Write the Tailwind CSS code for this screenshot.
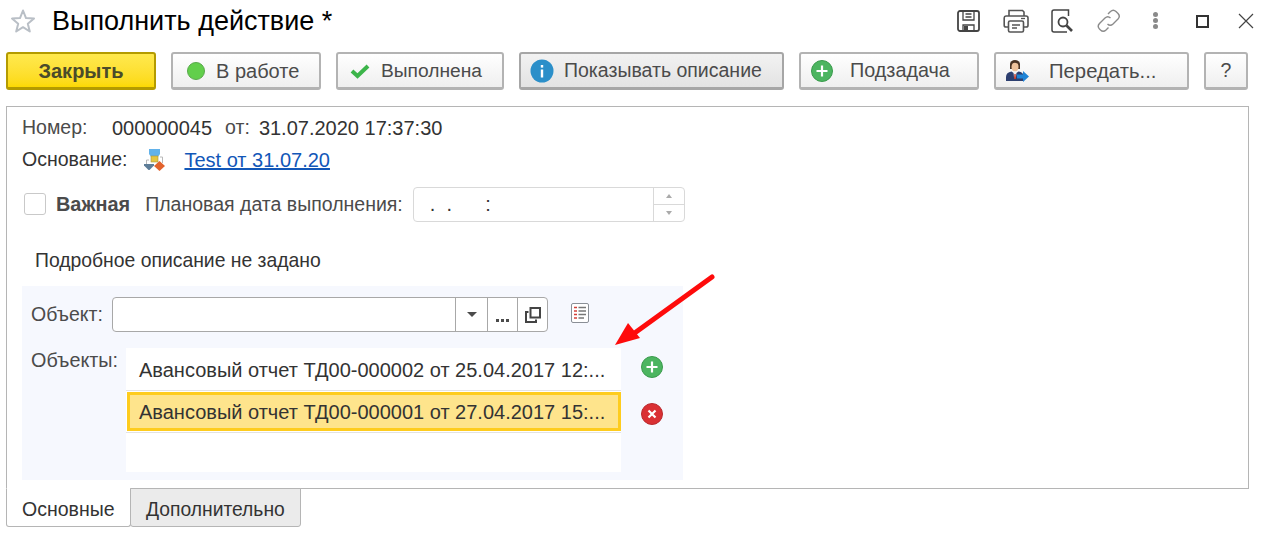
<!DOCTYPE html>
<html lang="ru">
  <head>
    <meta charset="UTF-8" />
    <title>Выполнить действие</title>
    <script src="https://cdn.jsdelivr.net/npm/@tailwindcss/browser@4"></script>
  </head>
  <body class="relative w-[1275px] h-[541px] overflow-hidden bg-white font-['Liberation_Sans',Arial,sans-serif] text-[19.5px] text-[#4b4b4b]">
    <!-- Title row -->
    <header class="flex items-center h-[42px] pl-[10px] pr-[21px]">
      <svg class="w-[26px] h-[26px] mr-[16px]" viewBox="0 0 26 26" fill="none" stroke="#b9bfc6" stroke-width="2">
        <path d="M13 2.500l3 7.600 8 .5-6.200 5.100 2 7.800L13 19.200l-6.800 4.300 2-7.800L2 10.600l8-.5z" stroke-linejoin="round" />
      </svg>
      <h1 class="text-[27px] leading-none text-black whitespace-nowrap">Выполнить действие *</h1>
      <div class="ml-auto flex items-center">
        <!-- save -->
        <svg class="w-[23px] h-[22px] mr-[23px]" viewBox="0 0 23 22" fill="none" stroke="#444" stroke-width="1.800">
          <path d="M3 1h17a2 2 0 0 1 2 2v16a2 2 0 0 1-2 2H3a2 2 0 0 1-2-2V3a2 2 0 0 1 2-2z" />
          <path d="M6 1v9h11V1M8.500 4h6M8.500 7h6" stroke-width="1.300" />
          <path d="M6 21v-6h11v6" stroke-width="1.300" />
          <rect x="7" y="16" width="4" height="5" fill="#444" stroke="none" />
        </svg>
        <!-- print -->
        <svg class="w-[26px] h-[24px] mr-[22px]" viewBox="0 0 26 24" fill="none" stroke="#555" stroke-width="1.600">
          <path d="M6 7V1.500h13.500L21 3v4" />
          <path d="M5 18H3a1.800 1.800 0 0 1-1.800-1.800V9A2 2 0 0 1 3 7h20a2 2 0 0 1 2 2v7.200a1.800 1.800 0 0 1-1.800 1.800H21" />
          <rect x="5.500" y="12" width="15" height="11" rx="1.500" />
          <path d="M9 16h8M9 19h5" stroke-width="1.300" />
          <path d="M18 9.500h4" stroke-width="1.300" />
        </svg>
        <!-- preview -->
        <svg class="w-[23px] h-[24px] mr-[23px]" viewBox="0 0 23 24" fill="none" stroke="#444" stroke-width="1.500">
          <path d="M16 23H3a2 2 0 0 1-2-2V3a2 2 0 0 1 2-2h14.500v6" />
          <circle cx="12" cy="13" r="4.500" stroke-width="1.800" />
          <path d="M15.500 16.500l5.500 5.500" stroke-width="2.600" />
        </svg>
        <!-- link -->
        <svg class="w-[24px] h-[24px] mr-[32px]" viewBox="0 0 24 24" fill="none" stroke="#8b8b8b" stroke-width="1.400">
          <path d="M11 5l2.500-2.500a4 4 0 0 1 5.500 0l2 2a4 4 0 0 1 0 5.500l-5 5a4 4 0 0 1-5.500 0" />
          <path d="M13.500 9a4 4 0 0 0-5.500 0l-5.500 5.500a4 4 0 0 0 0 5.500l1 1a4 4 0 0 0 5.500 0l2.500-2.500" />
        </svg>
        <!-- more -->
        <div class="flex flex-col gap-[1px] mr-[38px] -mt-[2px]">
          <span class="block w-[5px] h-[5px] rounded-full bg-[#8a8a8a]"></span>
          <span class="block w-[5px] h-[5px] rounded-full bg-[#8a8a8a]"></span>
          <span class="block w-[5px] h-[5px] rounded-full bg-[#8a8a8a]"></span>
        </div>
        <div class="w-[13px] h-[13px] border-2 border-[#333] mr-[29px]"></div>
        <svg class="w-[16px] h-[16px]" viewBox="0 0 16 16" stroke="#444" stroke-width="1.200">
          <path d="M1 1l14 14M15 1L1 15" />
        </svg>
      </div>
    </header>

    <!-- Command bar -->
    <div class="flex items-start h-[39px] mt-[10px] ml-[6px] gap-[15px]">
      <button class="w-[150px] h-[38px] pt-px rounded-[3px] border-2 border-[#b49b00] border-b-[3px] bg-gradient-to-b from-[#ffe94d] to-[#fcd900] font-bold text-[20px] text-[#4b4b2a]">Закрыть</button>
      <button class="w-[150px] h-[38px] pt-px flex items-center pl-[14px] rounded-[3px] border-2 border-[#b3b3b3] border-b-[3px] bg-gradient-to-b from-white to-[#efefef] text-[20px]">
        <span class="block w-[18px] h-[18px] rounded-full bg-[#62cf4b] border border-[#59a94b] mr-[11px]"></span>В работе
      </button>
      <button class="w-[168px] h-[38px] pt-px flex items-center pl-[12px] rounded-[3px] border-2 border-[#b3b3b3] border-b-[3px] bg-gradient-to-b from-white to-[#efefef] text-[19.2px]">
        <svg class="w-[20px] h-[16px] mr-[11px]" viewBox="0 0 20 16" fill="none" stroke="#3cb54a" stroke-width="4">
          <path d="M2 8l5.500 5L18 3" />
        </svg>Выполнена
      </button>
      <button class="w-[265px] h-[38px] pt-px flex items-center pl-[9px] rounded-[3px] border-2 border-[#a6a6a6] border-b-[3px] bg-gradient-to-b from-[#f2f2f2] to-[#e3e3e3]">
        <svg class="w-[24px] h-[24px] mr-[10px]" viewBox="0 0 24 24">
          <circle cx="12" cy="12" r="11.500" fill="#2b8fc9" />
          <rect x="10.800" y="10.500" width="2.400" height="8" fill="#fff" />
          <rect x="10.800" y="6" width="2.400" height="2.600" fill="#fff" />
        </svg>Показывать описание
      </button>
      <button class="w-[180px] h-[38px] pt-px flex items-center pl-[10px] rounded-[3px] border-2 border-[#b3b3b3] border-b-[3px] bg-gradient-to-b from-white to-[#efefef] text-[19.8px]">
        <svg class="w-[22px] h-[22px] mr-[17px]" viewBox="0 0 22 22">
          <circle cx="11" cy="11" r="10.500" fill="#4cb560" stroke="#3a9a4c" />
          <path d="M11 5.500v11M5.500 11h11" stroke="#fff" stroke-width="2.200" />
        </svg>Подзадача
      </button>
      <button class="w-[195px] h-[38px] pt-px flex items-center pl-[9px] rounded-[3px] border-2 border-[#b3b3b3] border-b-[3px] bg-gradient-to-b from-white to-[#efefef] text-[20.300px]">
        <svg class="w-[24px] h-[22px] mr-[20px]" viewBox="0 0 24 22">
          <path d="M5 4a5 4 0 0 1 10 0v5H5z" fill="#4a3324" />
          <ellipse cx="10" cy="7" rx="3.500" ry="4.300" fill="#f0c39c" />
          <path d="M1 21v-4c0-3 2-5 5.500-5.500L10 14l3.500-2.500c2 .3 3.500 1.200 4.500 2.500v7z" fill="#2d3f70" />
          <path d="M8.500 12.500h3l-.7 6h-1.600z" fill="#eceff5" />
          <path d="M9.400 14h1.200l.4 5h-2z" fill="#c0392b" />
          <path d="M12 14.500h6V11l6 5.500-6 5.500v-3.500h-6z" fill="#1f84d6" />
        </svg>Передать...
      </button>
      <button class="w-[44px] h-[38px] pt-px rounded-[3px] border-2 border-[#b3b3b3] border-b-[3px] bg-gradient-to-b from-white to-[#efefef]">?</button>
    </div>

    <!-- Main panel -->
    <main class="h-[383px] w-[1243px] mt-[15px] ml-[6px] border border-[#b5b5b5] pt-[8px] pl-[15px]">
      <div class="flex items-center h-[26px]">
        <span class="w-[90px]">Номер:</span>
        <span class="text-[20px] text-[#333] mr-[13px]">000000045</span>
        <span class="mr-[9px]">от:</span>
        <span class="text-[20px] text-[#333]">31.07.2020 17:37:30</span>
      </div>
      <div class="flex items-center h-[26px] mt-[6px]">
        <span class="mr-[17px] text-[#333]">Основание:</span>
        <svg class="w-[21px] h-[22px] mr-[19px]" viewBox="0 0 21 22">
          <path d="M5 11H2.500v5M16 8h2.500v6" stroke="#b8b8b8" fill="none" />
          <path d="M5 0h11v5l-2.500 3.500h-6L5 5z" fill="#62b2ea" />
          <rect x="7" y="7" width="7" height="6" fill="#e5c641" stroke="#a59340" stroke-width=".6" />
          <path d="M0 15h10v1.500L5.500 21h-1L0 16.500z" fill="#5e7d98" />
          <path d="M15.500 12l5.500 5-5.500 5-5.500-5z" fill="#e2622c" />
        </svg>
        <a href="#" class="text-[20px] text-[#1257b8] underline">Test от 31.07.20</a>
      </div>
      <div class="flex items-center h-[36px] mt-[13px]">
        <span class="block w-[22px] h-[22px] ml-[2px] mr-[10px] rounded-[3px] border border-[#c9c9c9] bg-white"></span>
        <span class="font-bold text-[19.9px] mr-[15px] pt-px">Важная</span>
        <span class="mr-[10px] pt-px">Плановая дата выполнения:</span>
        <div class="flex w-[272px] h-[35px] rounded-[4px] border border-[#d9d9d9]">
          <div class="flex-1 pl-[16px] text-[20px] text-[#333] whitespace-pre leading-[33px]">.  .      :</div>
          <div class="flex flex-col w-[31px] border-l border-[#d9d9d9]">
            <div class="flex-1 flex items-center justify-center border-b border-[#d9d9d9]">
              <span class="block border-x-[3.500px] border-x-transparent border-b-[4px] border-b-[#aaa]"></span>
            </div>
            <div class="flex-1 flex items-center justify-center">
              <span class="block border-x-[3.500px] border-x-transparent border-t-[4px] border-t-[#aaa]"></span>
            </div>
          </div>
        </div>
      </div>
      <div class="h-[26px] mt-[25px] pl-[13px] text-[19.35px] text-[#333] leading-[26px]">Подробное описание не задано</div>

      <!-- Objects group -->
      <section class="w-[661px] h-[194px] mt-[13px] bg-[#f6f8fe] pt-[11px] pl-[9px]">
        <div class="flex items-center h-[35px]">
          <span class="w-[81px]">Объект:</span>
          <div class="flex w-[436px] h-[35px] bg-white rounded-[4px] border border-[#a8a8a8]">
            <div class="w-[342px]"></div>
            <div class="w-[32px] flex items-center justify-center border-l border-[#a8a8a8]">
              <span class="block border-x-[5px] border-x-transparent border-t-[5px] border-t-[#4b4b4b]"></span>
            </div>
            <div class="w-[30px] flex items-end justify-center pb-[9px] gap-[2px] border-l border-[#a8a8a8]">
              <span class="block w-[3px] h-[3px] bg-[#4b4b4b]"></span>
              <span class="block w-[3px] h-[3px] bg-[#4b4b4b]"></span>
              <span class="block w-[3px] h-[3px] bg-[#4b4b4b]"></span>
            </div>
            <div class="flex-1 flex items-center justify-center border-l border-[#a8a8a8]">
              <svg class="w-[16px] h-[16px]" viewBox="0 0 16 16" fill="none" stroke="#444" stroke-width="2">
                <rect x="5.500" y="1" width="9.500" height="9.500" />
                <path d="M3.500 5H1v10h10v-2.500" />
              </svg>
            </div>
          </div>
          <svg class="w-[18px] h-[20px] ml-[23px] -mt-[4px]" viewBox="0 0 18 20" fill="none">
            <rect x=".500" y=".500" width="17" height="19" rx="1.500" fill="#fff" stroke="#8a8f96" />
            <path d="M3 4.500h3M3 8h3M3 11.500h3M3 15h3" stroke="#d2403a" stroke-width="1.300" />
            <path d="M7.500 4.500H15M7.500 8H15M7.500 11.500H15M7.500 15H13" stroke="#777" stroke-width="1.300" />
          </svg>
        </div>
        <div class="flex mt-[16px]">
          <span class="w-[95px] pt-[1px] leading-[22px] text-[19.8px]">Объекты:</span>
          <div class="w-[495px] h-[124px] bg-white text-[20px] text-[#333]">
            <div class="h-[43px] pl-[13px] leading-[44px] border-b border-[#e3e3e3] whitespace-nowrap">Авансовый отчет ТД00-000002 от 25.04.2017 12:...</div>
            <div class="h-[39px] mt-px ml-px pl-[9px] leading-[35px] bg-[#fee48c] border-[3px] border-[#fecc1e] whitespace-nowrap">Авансовый отчет ТД00-000001 от 27.04.2017 15:...</div>
            <div class="h-px mt-px bg-[#e3e3e3]"></div>
          </div>
          <div class="flex flex-col ml-[20px] pt-[8px] gap-[25px]">
            <svg class="w-[22px] h-[22px]" viewBox="0 0 22 22">
              <circle cx="11" cy="11" r="10.500" fill="#4cb560" stroke="#3a9a4c" />
              <path d="M11 5.500v11M5.500 11h11" stroke="#fff" stroke-width="2.200" />
            </svg>
            <svg class="w-[22px] h-[22px]" viewBox="0 0 22 22">
              <circle cx="11" cy="11" r="10.500" fill="#da3034" stroke="#b92a2e" />
              <path d="M7.500 7.500l7 7M14.500 7.500l-7 7" stroke="#fff" stroke-width="2.200" />
            </svg>
          </div>
        </div>
      </section>
    </main>

    <!-- Tabs -->
    <nav class="flex h-[40px] ml-[6px] -mt-px">
      <div class="w-[125px] h-[39px] pl-[15px] leading-[41px] bg-white text-[#333] border border-t-white border-[#b5b5b5] rounded-b-[3px]">Основные</div>
      <div class="w-[171px] h-[39px] pl-[15px] leading-[41px] text-[19.3px] bg-[#ebebeb] text-[#333] border border-[#b5b5b5] rounded-b-[3px] -ml-px">Дополнительно</div>
    </nav>

    <!-- Annotation arrow -->
    <svg class="absolute left-[610px] top-[268px] w-[110px] h-[84px]" viewBox="0 0 110 84" fill="none">
      <path d="M102 9L26 64" stroke="#fe0b0b" stroke-width="5" stroke-linecap="round" />
      <path d="M5 77l13-22 12 15z" fill="#fe0b0b" />
    </svg>
  </body>
</html>
